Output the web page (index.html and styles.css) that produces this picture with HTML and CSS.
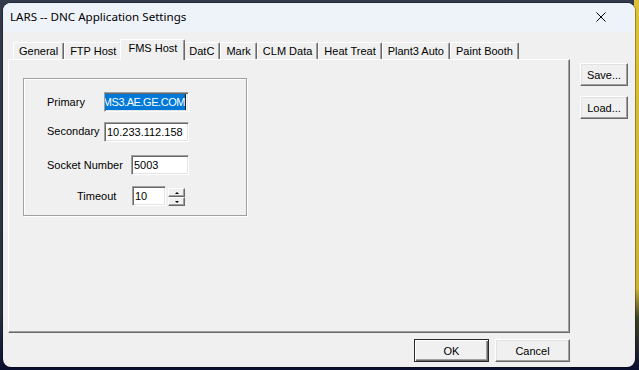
FILE: index.html
```html
<!DOCTYPE html>
<html lang="en">
<head>
  <meta charset="UTF-8" />
  <title>LARS -- DNC Application Settings</title>
  <link rel="stylesheet" href="styles.css">
</head>
<body>
  <div class="window">
    <div class="titlebar">
      <span class="title">LARS -- DNC Application Settings</span>
      <svg class="close" width="10" height="10" viewBox="0 0 10 10">
        <path d="M0.5 0.5 L9.5 9.5 M9.5 0.5 L0.5 9.5" stroke="#000" stroke-width="1" fill="none"/>
      </svg>
    </div>

    <div class="content">
      <div class="main">
        <div class="tabs">
          <div class="tab">General</div>
          <div class="tab">FTP Host</div>
          <div class="tab active">FMS Host</div>
          <div class="tab">DatC</div>
          <div class="tab">Mark</div>
          <div class="tab">CLM Data</div>
          <div class="tab">Heat Treat</div>
          <div class="tab">Plant3 Auto</div>
          <div class="tab">Paint Booth</div>
        </div>

        <div class="panel">
          <div class="group">
            <div class="row row-primary">
              <span class="label">Primary</span>
              <div class="field wide selected"><span class="sel">MS3.AE.GE.COM</span></div>
            </div>
            <div class="row row-secondary">
              <span class="label">Secondary</span>
              <div class="field wide">10.233.112.158</div>
            </div>
            <div class="row row-socket">
              <span class="label">Socket Number</span>
              <div class="field medium">5003</div>
            </div>
            <div class="row row-timeout">
              <span class="label">Timeout</span>
              <div class="field small">10</div>
              <div class="spin">
                <div class="spin-btn"><span class="arrow up"></span></div>
                <div class="spin-btn"><span class="arrow down"></span></div>
              </div>
            </div>
          </div>
        </div>
      </div>

      <div class="side">
        <button class="btn">Save...</button>
        <button class="btn">Load...</button>
      </div>
    </div>

    <div class="footer">
      <button class="btn wide-btn default">OK</button>
      <button class="btn wide-btn">Cancel</button>
    </div>
  </div>
</body>
</html>
```

FILE: styles.css
```css
body {
  margin: 0;
  width: 639px;
  height: 370px;
  overflow: hidden;
  font-family: "Liberation Sans", Arial, sans-serif;
  font-size: 11px;
  color: #000;
  background:
    linear-gradient(to bottom, #dcc23c 0, #cdb238 78%, #3c4224 86%, #0c1030 100%) right top / 5px 100% no-repeat,
    linear-gradient(to bottom, #323a4c 0, #2a3040 85%, #0c1030 100%);
}

.window {
  margin: 3px 0 0 3px;
  width: 632px;
  height: 364px;
  background: #f0f0f0;
  border-radius: 8px;
  overflow: hidden;
  box-shadow: 0 0 0 1px rgba(0, 0, 0, 0.3);
  display: flex;
  flex-direction: column;
}

/* title bar */
.titlebar {
  height: 29px;
  flex: none;
  background: #eef2f9;
  display: flex;
  align-items: center;
  padding: 0 0 3px 7px;
  box-sizing: border-box;
}

.title {
  font-family: "Noto Sans", "Open Sans", sans-serif;
  font-size: 11.6px;
}

.close {
  margin-left: auto;
  margin-right: 29px;
  margin-top: 2px;
}

/* tabs + panel */
.content {
  display: flex;
  padding: 7px 0 0 5px;
}

.main {
  width: 562px;
}

.tabs {
  display: flex;
  align-items: flex-end;
  height: 20px;
  padding-left: 5px;
}

.tab {
  height: 17px;
  line-height: 16px;
  padding: 0 5px;
  box-sizing: border-box;
  border-top: 1px solid #fff;
  border-left: 1px solid #fff;
  border-right: 1px solid #696969;
  border-radius: 2px 2px 0 0;
  box-shadow: inset -1px 0 #a0a0a0;
  white-space: nowrap;
}

.tab.active {
  height: 21px;
  line-height: 17px;
  margin: 0 -2px -1px;
  padding: 0 7px;
  background: #f0f0f0;
  position: relative;
  z-index: 1;
}

.panel {
  width: 562px;
  height: 274px;
  box-sizing: border-box;
  border: 1px solid;
  border-color: #fff #696969 #696969 #fff;
  box-shadow: inset -1px -1px #a0a0a0;
  padding: 18px 0 0 14px;
}

.group {
  width: 224px;
  height: 138px;
  box-sizing: border-box;
  border: 1px solid #a0a0a0;
  box-shadow: 1px 1px 0 #fff, inset 1px 1px 0 #fff;
  padding-top: 13px;
}

.row {
  display: flex;
  align-items: center;
  height: 20px;
  padding-left: 23px;
}

.row-secondary { margin-top: 10px; }
.row-socket { margin-top: 13px; }
.row-timeout { margin-top: 11px; padding-left: 53px; }

.row-primary .label,
.row-secondary .label { width: 57px; }
.row-secondary .label { margin-top: -3px; }
.row-socket .label { width: 84px; }
.row-timeout .label { width: 55px; }

.field {
  height: 20px;
  box-sizing: border-box;
  border: 1px solid;
  border-color: #a0a0a0 #fff #fff #a0a0a0;
  box-shadow: inset 1px 1px #696969, inset -1px -1px #e3e3e3;
  background: #fff;
  padding: 0 2px;
  line-height: 18px;
  white-space: nowrap;
  overflow: hidden;
}

.field.wide { width: 85px; }
.field.medium { width: 58px; }
.field.small { width: 34px; }

.field.selected {
  display: flex;
  justify-content: flex-end;
  align-items: center;
  padding: 0 2px 0 1px;
}

.sel {
  background: #0078d7;
  color: #fff;
  line-height: 16px;
  letter-spacing: -0.45px;
  border-right: 1px solid #202020;
}

.spin {
  margin-left: 2px;
  width: 17px;
  height: 18px;
  display: flex;
  flex-direction: column;
  margin-top: 2px;
}

.spin-btn {
  flex: 1;
  box-sizing: border-box;
  border: 1px solid;
  border-color: #fff #696969 #696969 #fff;
  box-shadow: inset -1px -1px #a0a0a0;
  display: flex;
  align-items: center;
  justify-content: center;
}

.arrow {
  width: 0;
  height: 0;
  border-left: 2px solid transparent;
  border-right: 2px solid transparent;
}

.arrow.up { border-bottom: 2px solid #000; }
.arrow.down { border-top: 2px solid #000; }

/* buttons */
.side {
  display: flex;
  flex-direction: column;
  gap: 10px;
  margin: 24px 0 0 10px;
}

.btn {
  font-family: "Liberation Sans", Arial, sans-serif;
  font-size: 11px;
  color: #000;
  width: 48px;
  height: 23px;
  padding: 0;
  background: #f0f0f0;
  border: 1px solid;
  border-color: #fff #696969 #696969 #fff;
  box-shadow: inset -1px -1px #a0a0a0, inset 1px 1px #e3e3e3;
}

.footer {
  display: flex;
  justify-content: flex-end;
  gap: 6px;
  padding: 6px 65px 0 0;
}

.btn.wide-btn { width: 75px; }

.btn.default {
  border: 1px solid #2a2a2a;
  box-shadow: inset 1px 1px #fff, inset -1px -1px #696969, inset -2px -2px #a0a0a0;
}
```
